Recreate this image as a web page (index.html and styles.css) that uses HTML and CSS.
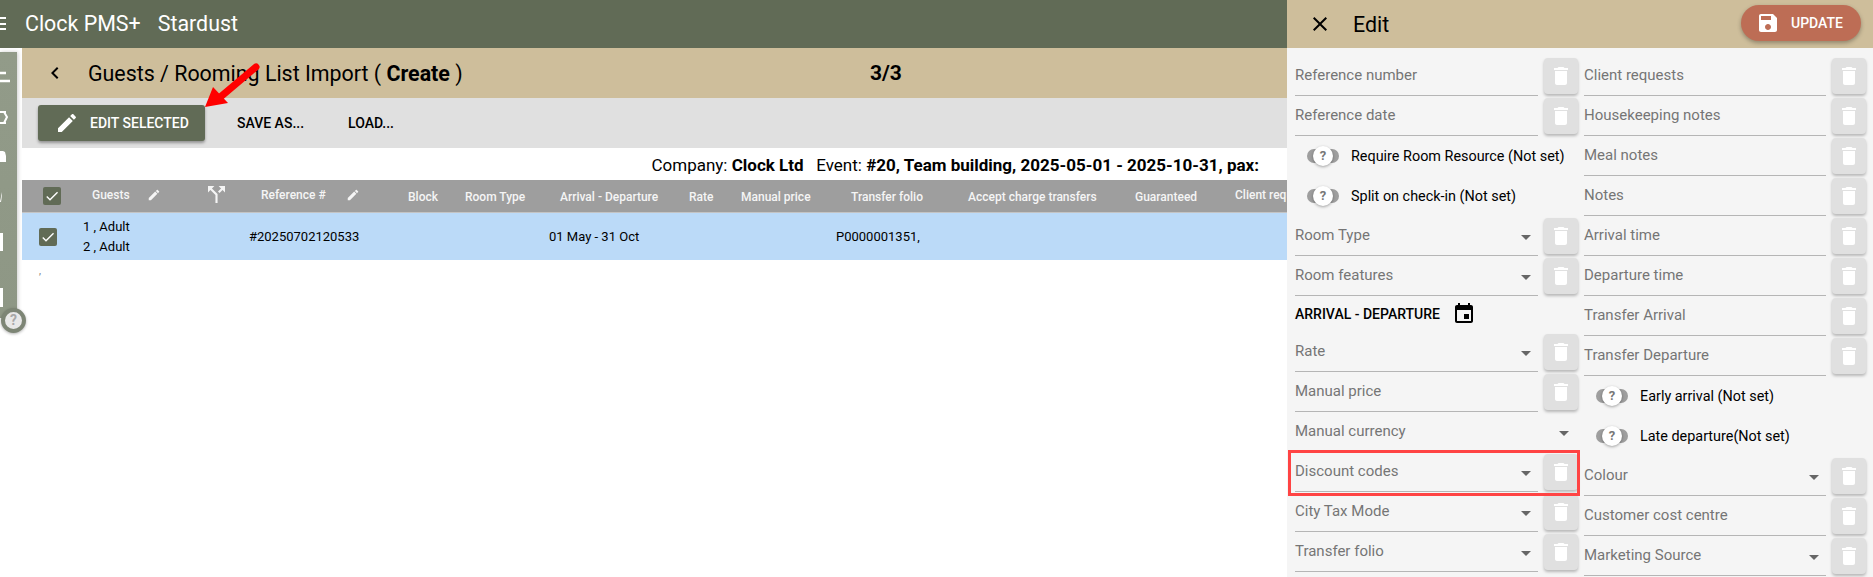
FILE: index.html
```html
<!DOCTYPE html>
<html lang="en">
<head>
<meta charset="utf-8">
<title>Clock PMS+ Stardust</title>
<link rel="stylesheet" href="styles.css">
</head>
<body>
<svg class="defs" width="0" height="0" aria-hidden="true">
  <symbol id="i-edit" viewBox="0 0 24 24"><path d="M3 17.25V21h3.75L17.81 9.94l-3.75-3.75L3 17.25zM20.71 7.04c.39-.39.39-1.02 0-1.41l-2.34-2.34c-.39-.39-1.02-.39-1.41 0l-1.83 1.83 3.75 3.75 1.83-1.83z"/></symbol>
  <symbol id="i-del" viewBox="0 0 24 24"><path d="M6 19c0 1.1.9 2 2 2h8c1.1 0 2-.9 2-2V7H6v12zM19 4h-3.5l-1-1h-5l-1 1H5v2h14V4z"/></symbol>
  <symbol id="i-drop" viewBox="0 0 24 24"><path d="M7 10l5 5 5-5z"/></symbol>
  <symbol id="i-check" viewBox="0 0 24 24"><path d="M9 16.17L4.83 12l-1.42 1.41L9 19 21 7l-1.41-1.41z"/></symbol>
</svg>

<header class="topbar">
  <svg class="burger" width="6" height="14" viewBox="0 0 6 14"><path d="M0 1h6M0 7h6M0 12h6"/></svg>
  <span class="brand">Clock PMS+</span>
  <span class="brand brand-sub">Stardust</span>
</header>

<div class="shell">
  <nav class="rail">
    <svg class="rail-i" width="14" height="40" viewBox="0 0 14 40"><path d="M0 16h6M0 24h10" stroke="#fff" stroke-width="2.5"/></svg>
    <svg class="rail-i" width="14" height="40" viewBox="0 0 14 40"><path d="M0 15h6M0 26h6M4 15l3 5-3 6" stroke="#fff" stroke-width="2" fill="none"/></svg>
    <svg class="rail-i" width="14" height="40" viewBox="0 0 14 40"><path d="M0 14h3l2 1 1 4v6H0z" fill="#fff"/></svg>
    <svg class="rail-i" width="14" height="40" viewBox="0 0 14 40"><path d="M0 25l2-10v3l-1 7z" fill="#fff"/></svg>
    <svg class="rail-i rail-box" width="14" height="40" viewBox="0 0 14 40"><path d="M0 12h3v18H0z" fill="#fff"/></svg>
    <svg class="rail-i rail-last" width="14" height="40" viewBox="0 0 14 40"><path d="M0 11h3v19H0z" fill="#fff"/></svg>
    <span class="help">?</span>
  </nav>

  <main class="main">
    <div class="subbar">
      <svg class="back" width="24" height="24" viewBox="0 0 24 24"><path d="M15.41 7.41L14 6l-6 6 6 6 1.41-1.41L10.83 12z"/></svg>
      <h1 class="page-title">Guests / Rooming List Import ( <b>Create</b> )</h1>
      <span class="step">3/3</span>
    </div>

    <div class="toolbar">
      <button class="btn-primary"><svg width="24" height="24"><use href="#i-edit"/></svg><span>EDIT SELECTED</span></button>
      <button class="btn-flat">SAVE AS...</button>
      <button class="btn-flat btn-load">LOAD...</button>
    </div>

    <p class="info">Company: <b>Clock Ltd</b> &nbsp; Event: <b>#20, Team building, 2025-05-01 - 2025-10-31, pax:</b></p>

    <div class="thead">
      <span class="chk chk-h"><svg width="16" height="16"><use href="#i-check"/></svg></span>
      <span class="th th-up">Guests<svg class="th-edit" width="14" height="14"><use href="#i-edit"/></svg></span>
      <svg class="th-split" width="17" height="17" viewBox="4 4 16 16"><path d="M14 4l2.29 2.29-2.88 2.88 1.42 1.42 2.88-2.88L20 10V4zm-4 0H4v6l2.29-2.29 4.71 4.7V20h2v-8.41l-5.29-5.3z"/></svg>
      <span class="th th-up">Reference #<svg class="th-edit th-edit-ref" width="14" height="14"><use href="#i-edit"/></svg></span>
      <span class="th">Block</span>
      <span class="th">Room Type</span>
      <span class="th">Arrival - Departure</span>
      <span class="th">Rate</span>
      <span class="th">Manual price</span>
      <span class="th">Transfer folio</span>
      <span class="th">Accept charge transfers</span>
      <span class="th">Guaranteed</span>
      <span class="th th-up">Client requests</span>
    </div>

    <div class="trow">
      <span class="chk chk-r"><svg width="16" height="16"><use href="#i-check"/></svg></span>
      <span class="td td-guests">1 , Adult<br>2 , Adult</span>
      <span class="td">#20250702120533</span>
      <span class="td">01 May - 31 Oct</span>
      <span class="td">P0000001351,</span>
    </div>
    <span class="stray">,</span>
  </main>
</div>

<svg class="arrow" width="70" height="60" viewBox="0 0 70 60">
  <path d="M54 5L16 37" stroke="#f00" stroke-width="7" stroke-linecap="round" fill="none"/>
  <path d="M3 45L11 25 26 41z" fill="#f00"/>
</svg>

<aside class="panel">
  <div class="panel-head">
    <svg class="close" width="24" height="24" viewBox="0 0 24 24"><path d="M19 6.41L17.59 5 12 10.59 6.41 5 5 6.41 10.59 12 5 17.59 6.41 19 12 13.41 17.59 19 19 17.59 13.41 12z"/></svg>
    <span class="panel-title">Edit</span>
    <button class="btn-update">
      <svg width="24" height="24" viewBox="0 0 24 24"><path d="M17 3H5c-1.11 0-2 .9-2 2v14c0 1.1.89 2 2 2h14c1.1 0 2-.9 2-2V7l-4-4zm-5 16c-1.66 0-3-1.34-3-3s1.34-3 3-3 3 1.34 3 3-1.34 3-3 3zm3-10H5V5h10v4z"/></svg>
      <span>UPDATE</span>
    </button>
  </div>
  <div class="panel-body">
    <div class="col">
      <div class="field"><div class="input">Reference number</div><button class="trash"><svg width="24" height="24"><use href="#i-del"/></svg></button></div>
      <div class="field"><div class="input">Reference date</div><button class="trash"><svg width="24" height="24"><use href="#i-del"/></svg></button></div>
      <div class="toggle-row"><span class="toggle"><i>?</i></span>Require Room Resource (Not set)</div>
      <div class="toggle-row"><span class="toggle"><i>?</i></span>Split on check-in (Not set)</div>
      <div class="field"><div class="input">Room Type<svg class="drop" width="24" height="24"><use href="#i-drop"/></svg></div><button class="trash"><svg width="24" height="24"><use href="#i-del"/></svg></button></div>
      <div class="field"><div class="input">Room features<svg class="drop" width="24" height="24"><use href="#i-drop"/></svg></div><button class="trash"><svg width="24" height="24"><use href="#i-del"/></svg></button></div>
      <div class="date-row">ARRIVAL - DEPARTURE<svg width="24" height="24" viewBox="0 0 24 24"><path d="M17 12h-5v5h5v-5zM16 1v2H8V1H6v2H5c-1.11 0-1.99.9-1.99 2L3 19c0 1.1.89 2 2 2h14c1.1 0 2-.9 2-2V5c0-1.1-.9-2-2-2h-1V1h-2zm3 18H5V8h14v11z"/></svg></div>
      <div class="field"><div class="input">Rate<svg class="drop" width="24" height="24"><use href="#i-drop"/></svg></div><button class="trash"><svg width="24" height="24"><use href="#i-del"/></svg></button></div>
      <div class="field"><div class="input">Manual price</div><button class="trash"><svg width="24" height="24"><use href="#i-del"/></svg></button></div>
      <div class="field"><div class="input input-wide">Manual currency<svg class="drop" width="24" height="24"><use href="#i-drop"/></svg></div></div>
      <div class="field"><div class="input">Discount codes<svg class="drop" width="24" height="24"><use href="#i-drop"/></svg></div><button class="trash"><svg width="24" height="24"><use href="#i-del"/></svg></button></div>
      <div class="field"><div class="input">City Tax Mode<svg class="drop" width="24" height="24"><use href="#i-drop"/></svg></div><button class="trash"><svg width="24" height="24"><use href="#i-del"/></svg></button></div>
      <div class="field"><div class="input">Transfer folio<svg class="drop" width="24" height="24"><use href="#i-drop"/></svg></div><button class="trash"><svg width="24" height="24"><use href="#i-del"/></svg></button></div>
    </div>
    <div class="col">
      <div class="field"><div class="input">Client requests</div><button class="trash"><svg width="24" height="24"><use href="#i-del"/></svg></button></div>
      <div class="field"><div class="input">Housekeeping notes</div><button class="trash"><svg width="24" height="24"><use href="#i-del"/></svg></button></div>
      <div class="field"><div class="input">Meal notes</div><button class="trash"><svg width="24" height="24"><use href="#i-del"/></svg></button></div>
      <div class="field"><div class="input">Notes</div><button class="trash"><svg width="24" height="24"><use href="#i-del"/></svg></button></div>
      <div class="field"><div class="input">Arrival time</div><button class="trash"><svg width="24" height="24"><use href="#i-del"/></svg></button></div>
      <div class="field"><div class="input">Departure time</div><button class="trash"><svg width="24" height="24"><use href="#i-del"/></svg></button></div>
      <div class="field"><div class="input">Transfer Arrival</div><button class="trash"><svg width="24" height="24"><use href="#i-del"/></svg></button></div>
      <div class="field"><div class="input">Transfer Departure</div><button class="trash"><svg width="24" height="24"><use href="#i-del"/></svg></button></div>
      <div class="toggle-row"><span class="toggle"><i>?</i></span>Early arrival (Not set)</div>
      <div class="toggle-row"><span class="toggle"><i>?</i></span>Late departure(Not set)</div>
      <div class="field"><div class="input">Colour<svg class="drop" width="24" height="24"><use href="#i-drop"/></svg></div><button class="trash"><svg width="24" height="24"><use href="#i-del"/></svg></button></div>
      <div class="field"><div class="input">Customer cost centre</div><button class="trash"><svg width="24" height="24"><use href="#i-del"/></svg></button></div>
      <div class="field"><div class="input">Marketing Source<svg class="drop" width="24" height="24"><use href="#i-drop"/></svg></div><button class="trash"><svg width="24" height="24"><use href="#i-del"/></svg></button></div>
    </div>
  </div>
  <div class="highlight"></div>
</aside>
</body>
</html>
```

FILE: styles.css
```css
* { box-sizing: border-box; }
html, body { margin: 0; height: 577px; overflow: hidden; background: #fff; }
body { position: relative; font-family: Roboto, "Liberation Sans", sans-serif; color: #000; }
.defs { position: absolute; }
button { font-family: inherit; border: 0; cursor: pointer; padding: 0; }

.topbar { height: 48px; background: #616b56; color: #fff; display: flex; align-items: center; }
.burger { margin-right: 19px; stroke: #fff; stroke-width: 2; fill: none; }
.brand { font-size: 21.4px; line-height: 48px; }
.brand-sub { margin-left: 17px; }

.shell { display: flex; height: 529px; }
.rail { position: relative; width: 17px; height: 266px; margin-top: 4px; padding-top: 5px; background: linear-gradient(180deg, #929b89, #8e9785); display: flex; flex-direction: column; box-shadow: 1px 0 4px rgba(0,0,0,.2); flex: none; }
.rail-i { display: block; flex: none; }
.rail-box { margin-top: 4px; }
.rail-last { margin-top: 16px; }
.help { position: absolute; left: 1px; bottom: -15px; width: 25px; height: 25px; border-radius: 50%; border: 4px solid #7d8575; background: #e8e8e8; color: #a8a8a8; font-size: 14px; font-weight: 700; line-height: 17px; text-align: center; box-shadow: 0 1px 3px rgba(0,0,0,.3); }

.main { flex: 1; margin-left: 5px; min-width: 0; position: relative; }
.subbar { height: 50px; background: #cebe9b; display: flex; align-items: center; padding-left: 21px; }
.back { flex: none; }
.page-title { margin: 0 0 0 21px; font-size: 21.4px; font-weight: 400; width: 782px; white-space: nowrap; }
.page-title b { font-weight: 700; }
.step { font-size: 21px; font-weight: 700; }

.toolbar { height: 50px; background: #e0e0e0; display: flex; align-items: center; padding-left: 16px; }
.btn-primary { width: 167px; height: 36px; background: #616b56; color: #fff; border-radius: 3px; box-shadow: 0 2px 3px rgba(0,0,0,.35); display: flex; align-items: center; padding-left: 17px; font-size: 14px; font-weight: 500; gap: 11px; }
.btn-primary svg { fill: #fff; flex: none; }
.btn-flat { background: none; font-size: 14px; font-weight: 500; color: #000; margin-left: 32px; }
.btn-load { margin-left: 44px; }

.info { margin: 0; height: 32px; line-height: 34px; font-size: 17px; padding-right: 614px; text-align: right; white-space: nowrap; }
.info b { font-weight: 700; }

.thead { height: 33px; background: #9e9e9e; border-bottom: 1px solid #c4c4c4; display: grid; grid-template-columns: 70px 116px 53px 147px 57px 95px 129px 52px 110px 117px 167px 100px 400px; align-items: center; overflow: hidden; }
.th { font-size: 12px; font-weight: 500; color: #f5f5f5; white-space: nowrap; display: flex; align-items: center; padding-top: 1px; }
.th-up { padding-top: 0; margin-top: -3px; }
.th-edit { fill: #f5f5f5; margin-left: 17px; }
.th-edit-ref { margin-left: 20px; }
.th-split { fill: #f5f5f5; margin-top: -4px; }

.chk { width: 18px; height: 18px; background: #616b56; border-radius: 2px; display: flex; align-items: center; justify-content: center; }
.chk svg { fill: #fff; }
.chk-h { margin-left: 21px; }
.chk-r { margin-left: 17px; }

.trow { height: 47px; background: #bbdaf8; display: grid; grid-template-columns: 61px 166px 300px 287px 300px; align-items: center; }
.td { font-size: 13px; line-height: 20px; white-space: nowrap; }
.stray { display: block; margin: 5px 0 0 17px; font-size: 10px; line-height: 12px; color: #777; }

.arrow { position: absolute; left: 202px; top: 62px; }

.panel { position: absolute; top: 0; right: 0; width: 586px; height: 577px; background: #f5f5f5; overflow: hidden; }
.panel-head { height: 48px; background: #cebe9b; display: flex; align-items: center; padding-left: 21px; }
.close { flex: none; }
.panel-title { font-size: 21.4px; margin-left: 21px; }
.btn-update { margin-left: auto; margin-right: 12px; margin-top: -2px; width: 120px; height: 36px; border-radius: 18px; background: #bd6d55; color: #fff; display: flex; align-items: center; padding-left: 15px; font-size: 14px; font-weight: 500; gap: 11px; box-shadow: 0 2px 4px rgba(0,0,0,.3); }
.btn-update svg { fill: #fff; flex: none; }

.panel-body { display: grid; grid-template-columns: 283px 282px; gap: 6px; padding: 8px 0 0 8px; }
.field { height: 40px; display: flex; }
.input { flex: 1; min-width: 0; height: 40px; border-bottom: 1px solid #b5b5b5; font-size: 15px; line-height: 38px; color: #757575; position: relative; white-space: nowrap; }
.drop { position: absolute; right: 0; top: 9px; fill: #666; }
.input-wide .drop { right: 2px; }
.trash { flex: none; width: 34px; height: 36px; margin: 2px 0 0 6px; background: #e0e0e0; border-radius: 4px; box-shadow: 0 2px 3px rgba(0,0,0,.25); display: flex; align-items: center; justify-content: center; }
.trash svg { fill: #fff; }

.toggle-row { height: 40px; display: flex; align-items: center; padding-left: 12px; font-size: 14.4px; white-space: nowrap; }
.toggle { position: relative; flex: none; width: 32px; height: 14px; border-radius: 7px; background: #9e9e9e; margin-right: 12px; }
.toggle i { position: absolute; left: 6px; top: -3px; width: 20px; height: 20px; border-radius: 50%; background: #fff; box-shadow: 0 1px 3px rgba(0,0,0,.35); color: #777; font-size: 13px; font-weight: 700; font-style: normal; line-height: 20px; text-align: center; }

.date-row { height: 36px; display: flex; align-items: center; font-size: 14px; font-weight: 500; gap: 12px; }

.highlight { position: absolute; left: 1px; top: 450px; width: 292px; height: 46px; border: 3px solid #f44; }
```
